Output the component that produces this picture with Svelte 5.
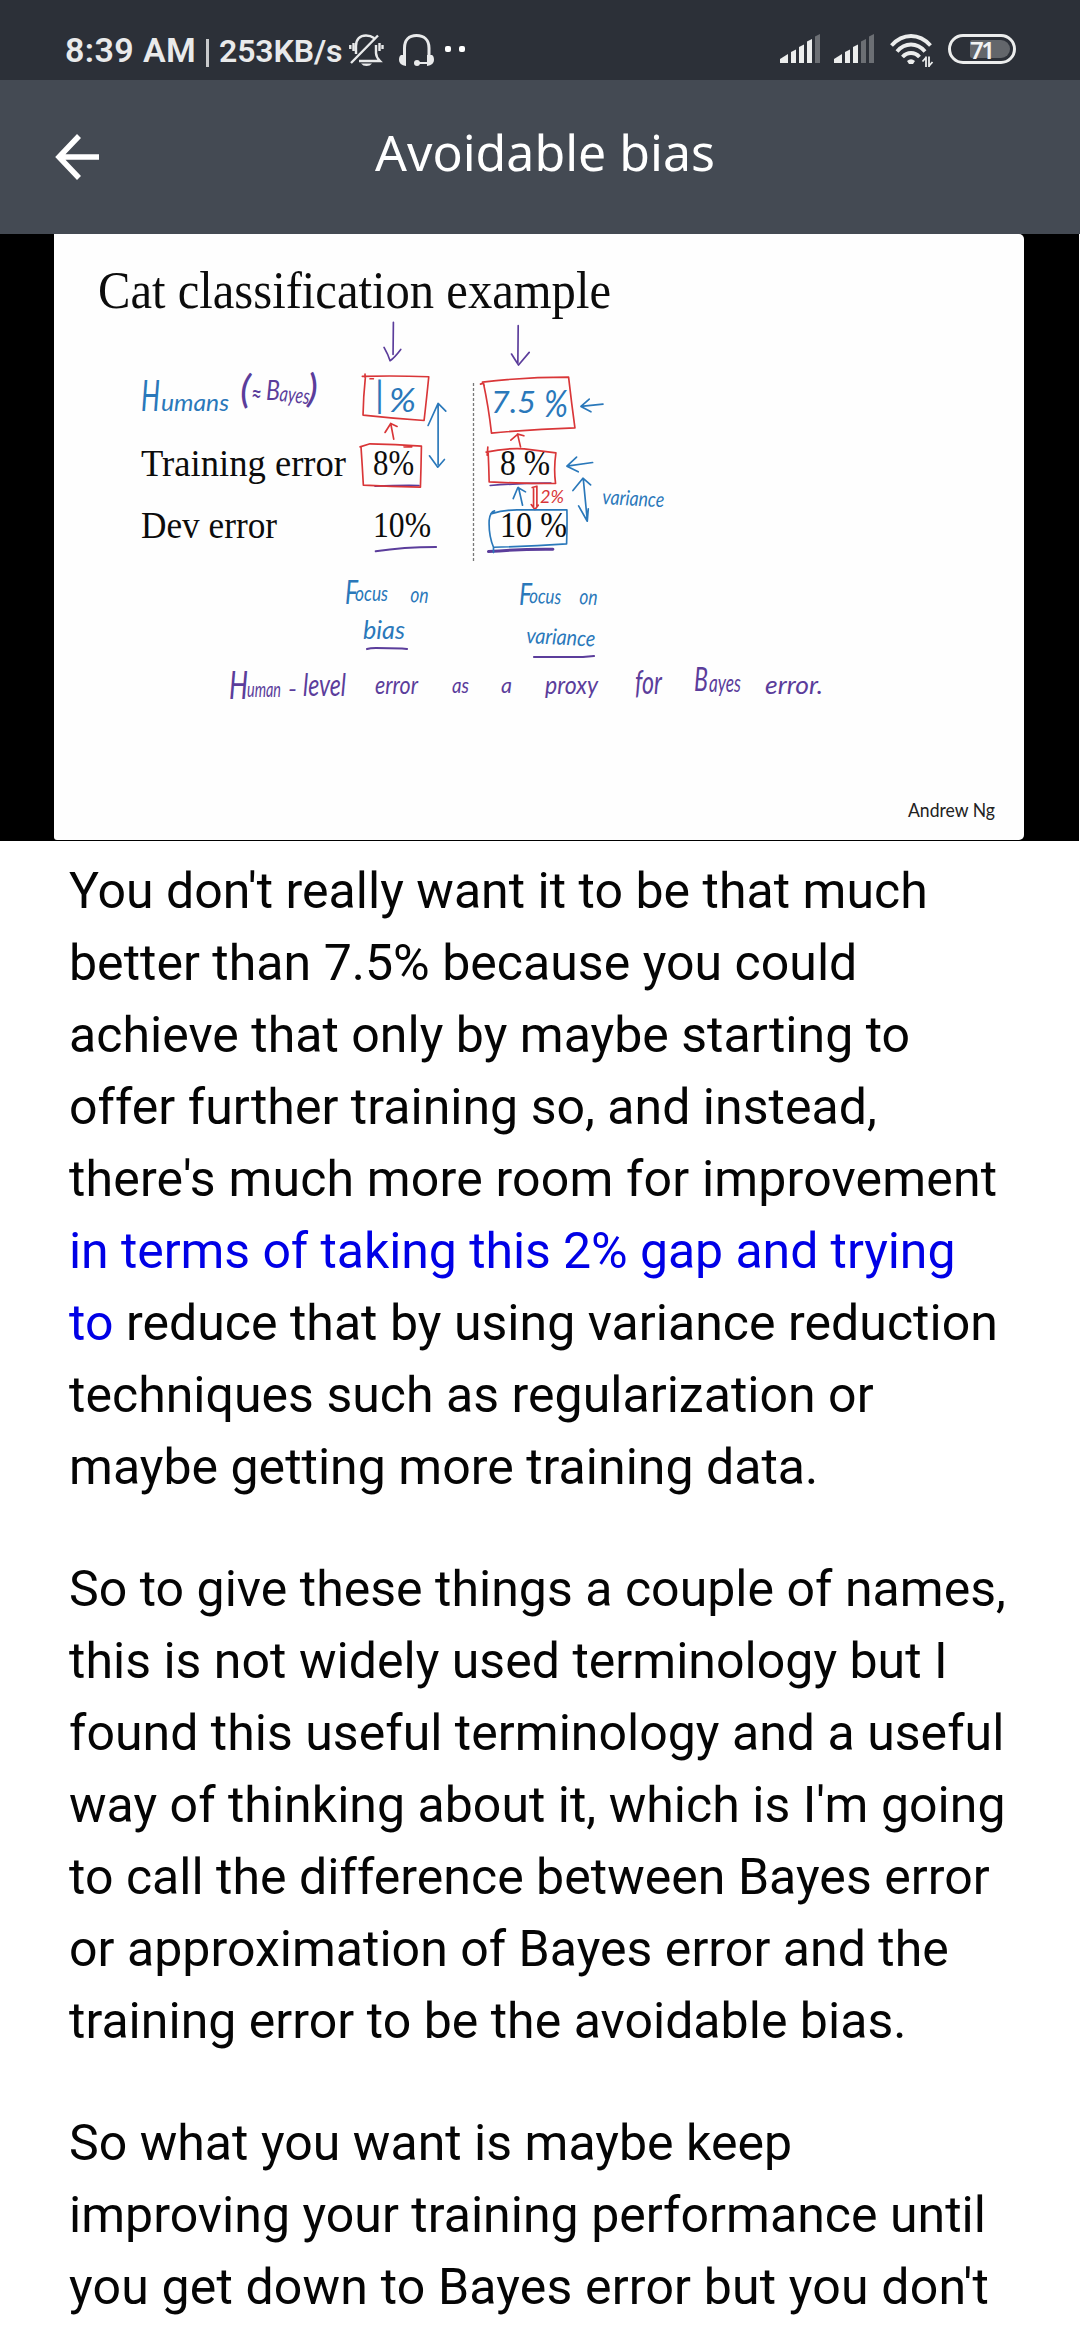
<script>
  const blue = '#2a78ba';
  const purple = '#5b3d9b';
  const red = '#d93638';
  const signals = [4, 3];
  const bars = [
    'M0 25 8 20V29H0Z',
    'M11 18 16 15.500V29H11Z',
    'M19 13 24 10.500V29H19Z',
    'M27 7.500 32 5V29H27Z',
    'M35 2.500 40 0V29H35Z'
  ];

  // Typeset labels: x, baseline, width, size
  const printed = [
    { t: 'Cat classification example', x: 98, y: 308, w: 513, s: 52 },
    { t: 'Training error', x: 141, y: 476, w: 205, s: 38 },
    { t: 'Dev error', x: 141, y: 537.500, w: 136, s: 38 },
    { t: '8%', x: 373, y: 475, w: 41, s: 36 },
    { t: '10%', x: 373, y: 537, w: 58, s: 36 },
    { t: '8 %', x: 500, y: 475, w: 50, s: 36 },
    { t: '10 %', x: 500, y: 537, w: 67, s: 36 }
  ];

  // Pen annotations
  const written = [
    { t: 'H', x: 141, y: 411, w: 19, s: 43, c: blue, r: 0 },
    { t: 'umans', x: 161, y: 411, w: 68, s: 23, c: blue, r: 0 },
    { t: '(', x: 240, y: 403, w: 11, s: 38, c: purple, r: 0 },
    { t: '≈', x: 251, y: 404, w: 11, s: 28, c: purple, r: 0 },
    { t: 'B', x: 266, y: 400, w: 14, s: 27, c: purple, r: 0 },
    { t: 'ayes', x: 279, y: 401, w: 30, s: 22, c: purple, r: 6 },
    { t: ')', x: 307, y: 402, w: 11, s: 38, c: purple, r: 0 },
    { t: '|', x: 375, y: 408, w: 9, s: 36, c: blue, r: 0 },
    { t: '%', x: 389, y: 412, w: 27, s: 33, c: blue, r: 0 },
    { t: '7.5', x: 491, y: 413, w: 45, s: 31, c: blue, r: 0 },
    { t: '%', x: 544, y: 417, w: 24, s: 36, c: blue, r: 0 },
    { t: '2%', x: 540, y: 503, w: 24, s: 18, c: red, r: 0 },
    { t: 'variance', x: 602, y: 504, w: 62, s: 21, c: blue, r: 3 },
    { t: 'F', x: 345, y: 604, w: 13, s: 32, c: blue, r: 0 },
    { t: 'ocus', x: 355, y: 601, w: 33, s: 22, c: blue, r: 0 },
    { t: 'on', x: 410, y: 602, w: 18, s: 22, c: blue, r: 4 },
    { t: 'bias', x: 363, y: 639, w: 42, s: 25, c: blue, r: 0 },
    { t: 'F', x: 519, y: 605, w: 13, s: 30, c: blue, r: 0 },
    { t: 'ocus', x: 529, y: 603, w: 32, s: 21, c: blue, r: 2 },
    { t: 'on', x: 579, y: 604, w: 18, s: 22, c: blue, r: 4 },
    { t: 'variance', x: 526, y: 643, w: 69, s: 22, c: blue, r: 3 },
    { t: 'H', x: 229, y: 699, w: 19, s: 38, c: purple, r: 0 },
    { t: 'uman', x: 247, y: 697, w: 34, s: 22, c: purple, r: 0 },
    { t: '-', x: 288, y: 697, w: 9, s: 24, c: purple, r: 0 },
    { t: 'level', x: 303, y: 696, w: 43, s: 30, c: purple, r: 0 },
    { t: 'error', x: 375, y: 694, w: 43, s: 25, c: purple, r: 0 },
    { t: 'as', x: 452, y: 693, w: 17, s: 22, c: purple, r: 0 },
    { t: 'a', x: 501, y: 693, w: 11, s: 22, c: purple, r: 0 },
    { t: 'proxy', x: 545, y: 694, w: 53, s: 26, c: purple, r: 0 },
    { t: 'for', x: 635, y: 694, w: 27, s: 33, c: purple, r: 0 },
    { t: 'B', x: 694, y: 691, w: 14, s: 33, c: purple, r: 0 },
    { t: 'ayes', x: 709, y: 692, w: 32, s: 25, c: purple, r: 0 },
    { t: 'error.', x: 765, y: 694, w: 58, s: 25, c: purple, r: 0 }
  ];
</script>

<div class="screen">
  <div class="status">
    <span class="time">8:39 AM</span>
    <span class="sep"></span>
    <span class="speed">253KB/s</span>
    <svg class="bell" width="36" height="34" viewBox="0 0 36 34" fill="none" stroke="#e9eaeb" stroke-width="2.400">
      <path d="M2 29 29 1.500M7 20V12C7 5 11 1.500 17 1.500C20 1.500 23 2.500 25 4M27 11V19Q27 23 31 27H10M4.500 9V17M1.300 11V15M30.500 9V17M33.500 11V15" />
      <path d="M12 29.500H23Q21 32 17.500 32Q14 32 12 29.500Z" fill="#e9eaeb" stroke="none" />
    </svg>
    <svg class="phones" width="36" height="34" viewBox="0 0 36 34" fill="none" stroke="#e9eaeb">
      <path d="M5.500 24V14C5.500 6 10 1.500 17.500 1.500S30 6 30 14V24" stroke-width="3" />
      <path d="M18 29H30" stroke-width="2" />
      <path d="M2 21H7V32Q0 31 0 26Q0 22 2 21ZM33 21H28V32Q35 31 35 26Q35 22 33 21Z" fill="#e9eaeb" stroke="none" />
      <circle cx="18" cy="29" r="3" fill="#e9eaeb" stroke="none" />
    </svg>
    <i class="dot"></i><i class="dot"></i>
    <div class="right">
      {#each signals as level}
        <svg width="40" height="29" viewBox="0 0 40 29">
          {#each bars as d, i}
            <path {d} fill={i < level ? '#eceded' : '#6c6f74'} />
          {/each}
        </svg>
      {/each}
      <svg class="wifi" width="44" height="34" viewBox="0 0 44 34" fill="none" stroke="#eceded" stroke-width="3.800">
        <path d="M1.500 11.500Q10 2 21 2T40.500 11.500M7 17.500Q13 10.500 21 10.500T35 17.500M12.500 23Q16 19 21 19T29.500 23" />
        <path d="M17 27Q21 23.500 25 27L23 30H19Z" fill="#eceded" stroke="none" />
        <path d="M36 22.500V33M32.500 27.500 36 23.500M39 22.500V33M42.500 28 39 32" stroke-width="1.800" />
      </svg>
      <div class="battery"><div class="charge">71</div></div>
    </div>
  </div>

  <header>
    <svg class="back" width="45" height="46" viewBox="0 0 45 46" fill="none" stroke="#fff" stroke-width="5.500">
      <path d="M44 23H4M24 2 4 23 24 44" />
    </svg>
    <h1>Avoidable bias</h1>
  </header>

  <div class="video">
    <svg class="slide" width="970" height="606" viewBox="54 234 970 606" fill="none" stroke-linecap="round" stroke-linejoin="round">
      {#each printed as p}
        <text class="printed" x={p.x} y={p.y} font-size={p.s} textLength={p.w} lengthAdjust="spacingAndGlyphs">{p.t}</text>
      {/each}
      <path d="M473.500 383V563" stroke="#777" stroke-width="1.300" stroke-dasharray="3 2" stroke-linecap="butt" />

      {#each written as p}
        <text class="written" x={p.x} y={p.y} font-size={p.s} fill={p.c} textLength={p.w} lengthAdjust="spacingAndGlyphs" transform="rotate({p.r} {p.x} {p.y})">{p.t}</text>
      {/each}

      <g transform="translate(340 300) scale(.3337)" stroke-width="5">
        <g stroke={purple}>
          <path d="M160 67 159 163M132 142 Q145 165 150 182 Q164 172 182 148M534 77 533 188M514 162 Q525 180 535 195 Q546 182 567 157" />
          <path d="M105 558Q180 555 237 556" />
          <path d="M450 556Q550 548 632 549" />
          <path d="M107 753Q190 740 288 740" stroke-width="6" />
          <path d="M445 754Q540 746 638 747" stroke-width="9" />
        </g>
        <g stroke={red}>
          <path d="M75 222V232M67 229Q160 226 266 230Q260 290 252 361Q160 355 69 345Q70 290 76 232M90 236H100" />
          <path d="M421 252 430 249 432 257M427 246Q550 231 685 231Q694 310 704 383Q580 387 454 399Q445 320 430 250" />
          <path d="M161 417 152 370M135 397 152 370 171 379M541 440 532 402M512 420 533 402 551 407" />
          <path d="M60 440 90 431Q165 432 244 438Q243 500 241 561Q155 560 70 555Q67 500 63 441M192 440H215" />
          <path d="M443 441 441 465M438 456Q495 443 552 446L647 458Q640 505 646 550Q545 550 447 545Q446 500 444 456" />
          <path d="M576 562 590 558 590 618M580 566V622M573 613 584 628 594 615" />
        </g>
        <g stroke={blue}>
          <path d="M294 312V493M264 376 294 310 317 333M268 467 293 501 313 478" />
          <path d="M788 312 722 319M747 297 722 319 752 335M757 487 680 498M709 471 680 498 714 515" />
          <path d="M729 536 741 660M698 571 728 534 751 554M715 617 741 663 744 626" />
          <path d="M535 562 547 615M519 595 533 562 556 575" />
          <path d="M452 641Q490 629 530 629L680 629Q681 680 679 731Q570 738 460 741Q445 705 447 660Q450 635 463 632M460 741V757" />
        </g>
      </g>
      <g stroke={purple} stroke-width="2.200">
        <path d="M367 649Q370 648 376 648L402 648.500 407 649" />
        <path d="M534 657 583 657 594 656" />
      </g>
      <text class="author" x="908" y="817" textLength="87" lengthAdjust="spacingAndGlyphs">Andrew Ng</text>
    </svg>
  </div>

  <main>
    <p>
      You don't really want it to be that much<br />better than 7.5% because you could<br />achieve that only by maybe starting to<br />offer further training so, and instead,<br /><span class="loose">there's much more room for improvement</span><br /><span class="active"><span class="tight">in terms of taking this 2% gap and trying</span><br />to</span> reduce that by using variance reduction<br />techniques such as regularization or<br />maybe getting more training data.
    </p>
    <p>
      So to give these things a couple of names,<br />this is not widely used terminology but I<br />found this useful terminology and a useful<br />way of thinking about it, which is I'm going<br />to call the difference between Bayes error<br />or approximation of Bayes error and the<br />training error to be the avoidable bias.
    </p>
    <p>
      So what you want is maybe keep<br />improving your training performance until<br /><span class="loose">you get down to Bayes error but you don't</span>
    </p>
  </main>
</div>

<style>
  :global(body) {
    margin: 0;
    background: #fff;
  }
  .screen {
    width: 1080px;
    height: 2340px;
    overflow: hidden;
    background: #fff;
    font-family: Roboto, sans-serif;
  }
  .status {
    box-sizing: border-box;
    height: 80px;
    padding: 34px 64px 0 65px;
    background: #2c3038;
    color: #e9eaeb;
    display: flex;
    align-items: flex-start;
    white-space: nowrap;
  }
  .time {
    width: 142px;
    font-size: 34px;
    line-height: 32px;
    font-weight: 600;
    letter-spacing: 0.4px;
  }
  .sep {
    width: 3px;
    height: 28px;
    margin: 5px 10px 0 -1px;
    background: #c9cacc;
  }
  .speed {
    width: 130px;
    font-size: 32px;
    line-height: 34px;
    font-weight: 600;
    letter-spacing: -0.1px;
  }
  .bell {
    margin-right: 14px;
  }
  .phones {
    margin-right: 10px;
  }
  .dot {
    width: 6px;
    height: 6px;
    margin: 12px 8px 0 0;
    border-radius: 2px;
    background: #fff;
  }
  .right {
    margin-left: auto;
    display: flex;
    align-items: flex-start;
    gap: 14px;
  }
  .wifi {
    margin-left: 2px;
  }
  .battery {
    box-sizing: border-box;
    width: 68px;
    height: 30px;
    padding: 3px;
    border: 3px solid #eceded;
    border-radius: 15px;
    display: flex;
    justify-content: flex-end;
  }
  .charge {
    width: 40px;
    height: 18px;
    border-radius: 2px 9px 9px 2px;
    background: #63666b;
    color: #f2f2f2;
    font-family: 'Noto Sans', sans-serif;
    font-size: 24px;
    font-weight: 600;
    line-height: 19px;
    letter-spacing: -2.5px;
  }
  header {
    box-sizing: border-box;
    height: 154px;
    padding: 0 55px;
    background: #444a53;
    display: grid;
    grid-template-columns: 45px 1fr 45px;
    align-items: center;
  }
  .back {
    display: block;
  }
  h1 {
    margin: 0 0 11px;
    padding-left: 10px;
    color: #fff;
    font: 400 50px/68px 'Noto Sans', sans-serif;
    text-align: center;
  }
  .video {
    width: 1079px;
    height: 607px;
    background: #000;
  }
  .slide {
    display: block;
    margin-left: 54px;
    background: #fefefe;
    border-radius: 0 5px 5px 3px;
  }
  .printed {
    fill: #0c0c0c;
    font-family: 'Liberation Serif', serif;
  }
  .written {
    font-family: Lato, sans-serif;
    font-style: italic;
  }
  .author {
    fill: #222;
    font: 20px Lato, sans-serif;
  }
  main {
    padding: 14px 0 0 69px;
    color: #050505;
    font-size: 50px;
    line-height: 72px;
    letter-spacing: 0.03px;
    white-space: nowrap;
  }
  p {
    margin: 0 0 50px;
  }
  .active {
    color: #0000e6;
  }
  .loose {
    letter-spacing: 0.17px;
  }
  .tight {
    letter-spacing: -0.07px;
  }
</style>
